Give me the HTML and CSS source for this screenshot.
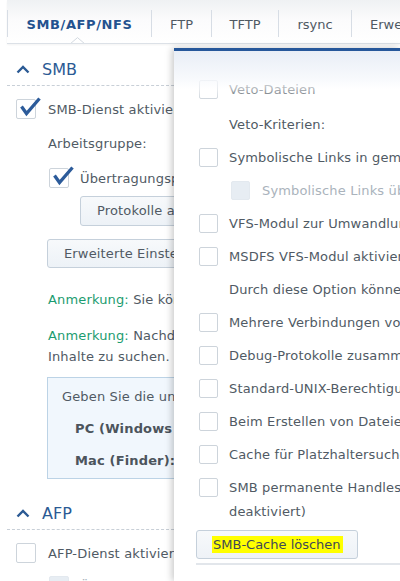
FILE: index.html
```html
<!DOCTYPE html>
<html lang="de">
<head>
<meta charset="utf-8">
<title>Dateidienste</title>
<link rel="stylesheet" href="styles.css">
</head>
<body>
<nav class="tabs">
  <div class="tab t1 active">SMB/AFP/NFS</div>
  <div class="tab t2">FTP</div>
  <div class="tab t3">TFTP</div>
  <div class="tab t4">rsync</div>
  <div class="tab t5">Erweitert</div>
  <svg class="caret" width="15" height="7" viewBox="0 0 15 7"><polyline points="0.5,6.6 7.5,0.6 14.5,6.6" fill="#fff" stroke="#d3d9e0" stroke-width="1"/></svg>
</nav>

<main class="main">
  <section class="sec">
    <h2 class="sec-head"><svg class="chev" width="14" height="9" viewBox="0 0 14 9"><polyline points="1.5,7.5 7,2 12.5,7.5" fill="none" stroke="#2b5a94" stroke-width="2.4"/></svg>SMB</h2>
    <div class="sb">
      <div class="row r1"><span class="cb big checked"><svg class="tick" width="24" height="22" viewBox="0 0 24 22"><path d="M3.5 9.5 L8.5 16.5 L21.5 1.5" fill="none" stroke="#2c5b9a" stroke-width="3.3"/></svg></span><span>SMB-Dienst aktivieren</span></div>
      <div class="lbl">Arbeitsgruppe:</div>
      <div class="row r2"><span class="cb big checked"><svg class="tick" width="24" height="22" viewBox="0 0 24 22"><path d="M3.5 9.5 L8.5 16.5 L21.5 1.5" fill="none" stroke="#2c5b9a" stroke-width="3.3"/></svg></span><span>Übertragungsprotokoll festlegen</span></div>
      <div class="btn btn1">Protokolle anzeigen</div>
      <div class="btn btn2">Erweiterte Einstellungen</div>
      <p class="note n1"><span class="hl">Anmerkung:</span> Sie können Windows-Clients erlauben ...</p>
      <p class="note n2"><span class="hl">Anmerkung:</span> Nachdem die Indizierung aktiviert wurde, nach<br>Inhalte zu suchen.</p>
      <div class="info">
        <div class="iline">Geben Sie die unten stehende Adresse ein</div>
        <div class="iline strong">PC (Windows Explorer):</div>
        <div class="iline strong">Mac (Finder):</div>
      </div>
    </div>
  </section>

  <section class="sec">
    <h2 class="sec-head afp"><svg class="chev" width="14" height="9" viewBox="0 0 14 9"><polyline points="1.5,7.5 7,2 12.5,7.5" fill="none" stroke="#2b5a94" stroke-width="2.4"/></svg>AFP</h2>
    <div class="sb">
      <div class="row r1"><span class="cb big"></span><span>AFP-Dienst aktivieren</span></div>
      <div class="row r3"><span class="cb big dis"></span><span class="distext">Übertragung</span></div>
    </div>
  </section>
</main>

<aside class="dialog">
  <div class="drow"><span class="cb"></span><span>Veto-Dateien</span></div>
  <div class="drow plain second"><span>Veto-Kriterien:</span></div>
  <div class="drow"><span class="cb"></span><span>Symbolische Links in gemeinsamen Ordnern erlauben</span></div>
  <div class="drow sub"><span class="cb dis"></span><span class="distext">Symbolische Links über gemeinsame Ordner hinweg erlauben</span></div>
  <div class="drow"><span class="cb"></span><span>VFS-Modul zur Umwandlung von Zeichen aktivieren</span></div>
  <div class="drow"><span class="cb"></span><span>MSDFS VFS-Modul aktivieren</span></div>
  <div class="drow plain"><span>Durch diese Option können Sie DFS-Links erstellen</span></div>
  <div class="drow"><span class="cb"></span><span>Mehrere Verbindungen von einem Client zulassen</span></div>
  <div class="drow"><span class="cb"></span><span>Debug-Protokolle zusammenfassen</span></div>
  <div class="drow"><span class="cb"></span><span>Standard-UNIX-Berechtigungen anwenden</span></div>
  <div class="drow"><span class="cb"></span><span>Beim Erstellen von Dateien die Zugriffsrechte übernehmen</span></div>
  <div class="drow"><span class="cb"></span><span>Cache für Platzhaltersuche aktivieren</span></div>
  <div class="drow"><span class="cb"></span><span>SMB permanente Handles aktivieren (standardmäßig<br>deaktiviert)</span></div>
  <div class="dbtn"><span class="mark">SMB-Cache löschen</span></div>
  <div class="dline"></div>
</aside>
</body>
</html>
```

FILE: styles.css
```css
html, body {
  margin: 0;
  padding: 0;
  overflow: hidden;
  background: #fff;
}

body {
  width: 400px;
  height: 581px;
  position: relative;
  font-family: "DejaVu Sans", Verdana, sans-serif;
  font-size: 13px;
  color: #505a64;
  white-space: nowrap;
}

/* ---------- tabs ---------- */
.tabs {
  position: relative;
  display: flex;
  box-sizing: border-box;
  height: 44px;
  margin-left: 7px;
  padding-top: 10px;
  border-bottom: 1px solid #dce1e7;
  background: linear-gradient(#eff1f3, #fbfbfc 45%, #fff);
  box-shadow: 0 1px 2px rgba(0, 0, 0, 0.05);
  overflow: hidden;
}

.tab {
  flex: none;
  box-sizing: border-box;
  height: 27px;
  line-height: 29px;
  text-align: center;
  border-left: 1px solid #d7dde5;
  color: #4f5963;
}

.tab.active {
  color: #24528f;
  font-weight: bold;
  letter-spacing: 0.6px;
}

.t1 { width: 144px; }
.t2 { width: 60px; }
.t3 { width: 67px; }
.t4 { width: 73px; }
.t5 { width: 49px; text-align: left; padding-left: 18px; overflow: hidden; }

.caret {
  position: absolute;
  left: 63px;
  bottom: -1px;
}

/* ---------- main ---------- */
.main {
  width: 174px;
  padding-left: 7px;
  box-sizing: border-box;
  overflow: hidden;
  letter-spacing: 0.15px;
}

.sec-head {
  display: flex;
  align-items: center;
  gap: 12px;
  margin: 0;
  padding: 16px 0 5px 9px;
  line-height: 20px;
  font-size: 16px;
  font-weight: normal;
  color: #2b5a94;
  letter-spacing: 0;
  border-bottom: 1px dashed #c8cfd7;
}

.sec-head.afp {
  padding-top: 25px;
}

.chev {
  display: block;
  margin-top: -2px;
}

.sb {
  padding-left: 9px;
}

.row {
  display: flex;
  align-items: center;
  height: 20px;
}

.r1 {
  margin-top: 13px;
  gap: 12px;
}

.r2 {
  margin-top: 14px;
  padding-left: 33px;
  gap: 11px;
}

.r3 {
  margin-top: 13px;
  padding-left: 33px;
  gap: 11px;
}

.lbl {
  margin-top: 15px;
  padding-left: 32px;
  line-height: 20px;
}

/* checkboxes */
.cb {
  position: relative;
  flex: none;
  box-sizing: border-box;
  width: 19px;
  height: 19px;
  border: 1px solid #cdd4db;
  border-radius: 2px;
  background: #fff;
}

.cb.big {
  width: 20px;
  height: 20px;
}

.cb.dis {
  background: #e7edf3;
  border-color: #e3e9ef;
}

.tick {
  position: absolute;
  left: 1px;
  top: -3px;
  overflow: visible;
}

.distext {
  color: #aab3bc;
}

/* buttons */
.btn {
  box-sizing: border-box;
  width: max-content;
  height: 30px;
  line-height: 28px;
  padding: 0 16px;
  border: 1px solid #c5d0db;
  border-radius: 3px;
  background: linear-gradient(#f7f9fb, #edf2f7);
  color: #505a64;
}

.btn1 {
  margin-top: 8px;
  margin-left: 64px;
}

.btn2 {
  margin-top: 13px;
  margin-left: 31px;
  height: 29px;
  line-height: 27px;
}

.note {
  margin: 0;
  padding-left: 32px;
  line-height: 21px;
}

.n1 { margin-top: 21px; }
.n2 { margin-top: 15px; }

.hl {
  color: #1b9c70;
}

.info {
  box-sizing: border-box;
  width: 420px;
  margin-top: 10px;
  margin-left: 31px;
  padding: 3px 0 1px 14px;
  border: 1px solid #bcd3e6;
  background: #f1f7fd;
}

.iline {
  height: 32px;
  line-height: 32px;
}

.iline.strong {
  padding-left: 13px;
  font-weight: bold;
  color: #4c545c;
}

/* ---------- dialog ---------- */
.dialog {
  position: absolute;
  left: 174px;
  top: 48px;
  bottom: 0;
  width: 226px;
  box-sizing: border-box;
  padding: 22px 0 0 25px;
  background: #fff;
  border-top: 3px solid #26579a;
  box-shadow: -2px 0 7px rgba(0, 0, 0, 0.22);
  overflow: hidden;
  letter-spacing: 0.15px;
}

.dialog::before {
  content: "";
  position: absolute;
  left: 0;
  right: 0;
  top: 0;
  height: 49px;
  z-index: 2;
  background: linear-gradient(
    rgba(233, 238, 246, 1) 0%,
    rgba(246, 248, 252, 0.9) 55%,
    rgba(255, 255, 255, 0.55) 78%,
    rgba(255, 255, 255, 0) 100%
  );
}

.drow {
  display: flex;
  align-items: flex-start;
  gap: 11px;
  box-sizing: border-box;
  min-height: 33px;
  padding: 4.5px 0;
  line-height: 24px;
}

.drow .cb {
  margin-top: 2.5px;
}

.drow.plain {
  padding-left: 30px;
}

.drow.second {
  margin-top: 2px;
}

.drow.sub {
  padding-left: 32px;
  gap: 12px;
}

.dbtn {
  box-sizing: border-box;
  width: 162px;
  height: 29px;
  margin-top: 2px;
  margin-left: -3px;
  padding: 5px 0 0 15px;
  border: 1px solid #c5d0db;
  border-radius: 3px;
  background: linear-gradient(#f7f9fb, #eef2f7);
  letter-spacing: 0;
}

.mark {
  display: inline-block;
  height: 17px;
  line-height: 17px;
  padding: 0 2px 0 1px;
  background: #ffff00;
  color: #3f4a55;
}

.dline {
  margin-top: 4px;
  margin-left: -3px;
  border-top: 2px solid #e2e6eb;
}
```
